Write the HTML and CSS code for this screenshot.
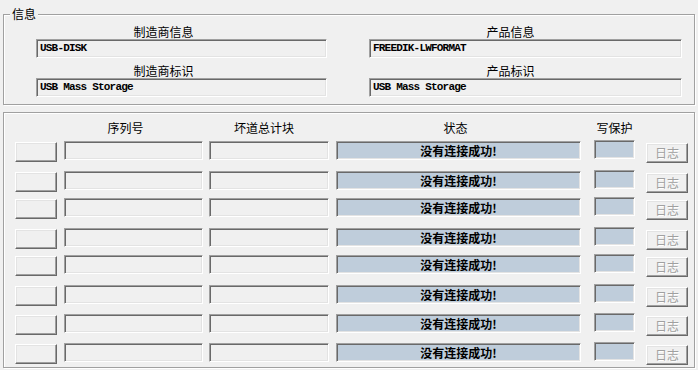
FILE: index.html
```html
<!DOCTYPE html>
<html>
<head>
<meta charset="utf-8">
<link rel="stylesheet" href="styles.css">
</head>
<body>
<div class="group info">
  <span class="legend">信息</span>
  <div class="info-grid">
    <div class="col col-left">
      <div class="label">制造商信息</div>
      <div class="field text">USB-DISK</div>
      <div class="label">制造商标识</div>
      <div class="field text">USB Mass Storage</div>
    </div>
    <div class="col col-right">
      <div class="label">产品信息</div>
      <div class="field text">FREEDIK-LWFORMAT</div>
      <div class="label">产品标识</div>
      <div class="field text">USB Mass Storage</div>
    </div>
  </div>
</div>

<div class="group devices">
  <div class="head">
    <div class="c-btn"></div>
    <div class="c-serial h">序列号</div>
    <div class="c-bad h">坏道总计块</div>
    <div class="c-status h">状态</div>
    <div class="c-wp h">写保护</div>
  </div>
  <div class="rows">
    <div class="row"><div class="btn c-btn"></div><div class="field c-serial"></div><div class="field c-bad"></div><div class="field status c-status">没有连接成功!</div><div class="field wp c-wp"></div><div class="btn log c-log">日志</div></div>
    <div class="row"><div class="btn c-btn"></div><div class="field c-serial"></div><div class="field c-bad"></div><div class="field status c-status">没有连接成功!</div><div class="field wp c-wp"></div><div class="btn log c-log">日志</div></div>
    <div class="row"><div class="btn c-btn"></div><div class="field c-serial"></div><div class="field c-bad"></div><div class="field status c-status">没有连接成功!</div><div class="field wp c-wp"></div><div class="btn log c-log">日志</div></div>
    <div class="row"><div class="btn c-btn"></div><div class="field c-serial"></div><div class="field c-bad"></div><div class="field status c-status">没有连接成功!</div><div class="field wp c-wp"></div><div class="btn log c-log">日志</div></div>
    <div class="row"><div class="btn c-btn"></div><div class="field c-serial"></div><div class="field c-bad"></div><div class="field status c-status">没有连接成功!</div><div class="field wp c-wp"></div><div class="btn log c-log">日志</div></div>
    <div class="row"><div class="btn c-btn"></div><div class="field c-serial"></div><div class="field c-bad"></div><div class="field status c-status">没有连接成功!</div><div class="field wp c-wp"></div><div class="btn log c-log">日志</div></div>
    <div class="row"><div class="btn c-btn"></div><div class="field c-serial"></div><div class="field c-bad"></div><div class="field status c-status">没有连接成功!</div><div class="field wp c-wp"></div><div class="btn log c-log">日志</div></div>
    <div class="row"><div class="btn c-btn"></div><div class="field c-serial"></div><div class="field c-bad"></div><div class="field status c-status">没有连接成功!</div><div class="field wp c-wp"></div><div class="btn log c-log">日志</div></div>
  </div>
</div>
</body>
</html>
```

FILE: styles.css
```css
* { box-sizing: border-box; }
html, body {
  margin: 0;
  padding: 0;
  background: #f0f0f0;
  width: 698px;
  height: 370px;
  overflow: hidden;
  font-family: "Noto Sans CJK SC", "Noto Sans", sans-serif;
  font-size: 12px;
  color: #000;
}
body { padding: 0 3px; }

.group {
  position: relative;
  border: 1px solid #a0a0a0;
  box-shadow: inset 1px 1px 0 #fff, 1px 1px 0 #fff;
}
.info {
  margin-top: 14px;
  height: 91px;
  padding: 10px 0 0 32px;
}
.legend {
  position: absolute;
  top: -8px;
  left: 6px;
  padding: 0 2px;
  line-height: 14px;
  background: #f0f0f0;
}
.info-grid {
  display: flex;
  gap: 42px;
}
.col { display: flex; flex-direction: column; }
.col-left { width: 291px; }
.col-right { width: 313px; }
.label {
  line-height: 14px;
  height: 14px;
  text-align: center;
  white-space: nowrap;
}
.col-left .label { padding-right: 36px; }
.col-right .label { padding-right: 30px; }
.col .field + .label { margin-top: 6px; }

.field {
  height: 19px;
  border: 1px solid;
  border-color: #a0a0a0 #fff #fff #a0a0a0;
  box-shadow: inset 1px 1px 0 #696969, inset -1px -1px 0 #e3e3e3;
  background: #f0f0f0;
}
.field.text {
  font-family: "Liberation Mono", monospace;
  font-weight: bold;
  font-size: 11px;
  letter-spacing: -0.8px;
  line-height: 17px;
  padding-left: 3px;
  white-space: nowrap;
}

.devices {
  margin-top: 7px;
  height: 256px;
  padding: 8px 0 0 11px;
}
.head, .row { display: flex; align-items: flex-start; }
.head { height: 14px; line-height: 14px; margin-bottom: 6px; }
.h { text-align: center; white-space: nowrap; }

.c-btn { width: 42px; flex: none; }
.c-serial { width: 139px; margin-left: 7px; flex: none; }
.c-bad { width: 120px; margin-left: 6px; flex: none; }
.c-status { width: 245px; margin-left: 7px; flex: none; }
.c-wp { width: 41px; margin-left: 13px; flex: none; }
.c-log { width: 42px; margin-left: 11px; flex: none; }

.head .c-serial { padding-right: 16px; }
.head .c-bad { padding-right: 10px; }
.head .c-status { padding-right: 6px; }

.row { height: 19px; }
.rows .row:nth-child(even) { margin-top: 11px; }
.rows .row:nth-child(odd) { margin-top: 8px; }
.rows .row:nth-child(1) { margin-top: 0; }
.rows .row:nth-child(7), .rows .row:nth-child(8) { margin-top: 10px; }

.btn {
  height: 20px;
  margin-top: 1px;
  border: 1px solid;
  border-color: #fff #696969 #696969 #fff;
  box-shadow: inset -1px -1px 0 #a0a0a0, inset 1px 1px 0 #e3e3e3;
  background: #f0f0f0;
}
.btn.log {
  margin-top: 2px;
  color: #a0a0a0;
  text-shadow: 1px 1px 0 #fff;
  text-align: center;
  line-height: 17px;
  font-size: 12px;
}
.status {
  background: #bfcddb;
  text-align: center;
  font-weight: bold;
  line-height: 17px;
  white-space: nowrap;
}
.wp { background: #bfcddb; margin-top: -1px; }
```
